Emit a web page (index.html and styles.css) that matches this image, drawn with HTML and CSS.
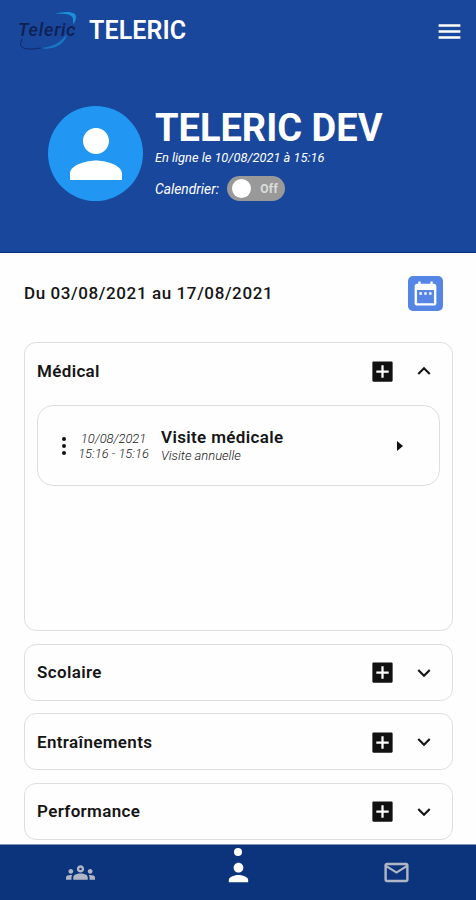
FILE: index.html
```
<!DOCTYPE html>
<html lang="fr">
<head>
  <meta charset="UTF-8">
  <meta name="viewport" content="width=device-width, initial-scale=1.0">
  <title>Teleric</title>
  <link rel="stylesheet" href="styles.css">
</head>
<body>
  <!-- shared icons -->
  <svg class="sprite">
    <symbol id="person" viewBox="0 0 24 24"><path d="M12 12c2.21 0 4-1.79 4-4s-1.79-4-4-4-4 1.79-4 4 1.79 4 4 4zm0 2c-2.67 0-8 1.34-8 4v2h16v-2c0-2.66-5.33-4-8-4z"/></symbol>
    <symbol id="add" viewBox="0 0 24 24"><path d="M20 3H4c-.6 0-1 .4-1 1v16c0 .6.4 1 1 1h16c.6 0 1-.4 1-1V4c0-.6-.4-1-1-1zm-2.500 10h-4.500v4.500h-2v-4.500H6.500v-2h4.500V6.500h2v4.500h4.500v2z"/></symbol>
    <symbol id="down" viewBox="0 0 24 24"><path d="M16.59 8.59L12 13.17 7.41 8.59 6 10l6 6 6-6z"/></symbol>
    <symbol id="up" viewBox="0 0 24 24"><path d="M12 8l-6 6 1.41 1.41L12 10.83l4.59 4.58L18 14z"/></symbol>
  </svg>

  <header class="header">
    <div class="topbar">
      <div class="logo">
        <span class="logo-text">Teleric</span>
        <svg class="logo-swoosh" viewBox="0 0 60 44">
          <path d="M36 3C47 0 58 0 58 6c0 3-1 5-3 7l0-5c0-5-9-6-19-5z" fill="#1b8fd8"/>
          <path d="M23 37c12-1 20-6 26-14-1 9-13 17-26 14z" fill="#1976c6"/>
          <path d="M4 28c-4 8 0 12 19 9" fill="none" stroke="#12286b" stroke-width="1"/>
        </svg>
      </div>
      <span class="brand">TELERIC</span>
      <svg class="menu-icon" viewBox="0 0 24 24"><path d="M3 18h18v-2.1H3V18zm0-5h18v-2H3v2zm0-7v2.1h18V6H3z"/></svg>
    </div>
    <div class="profile">
      <div class="avatar"><svg><use href="#person"/></svg></div>
      <div class="infos">
        <h1 class="name">TELERIC DEV</h1>
        <p class="online">En ligne le 10/08/2021 à 15:16</p>
        <div class="calendar-row">
          <span class="calendar-label">Calendrier:</span>
          <div class="switch"><span class="knob"></span><span class="switch-text">Off</span></div>
        </div>
      </div>
    </div>
  </header>

  <main class="content">
    <div class="period">
      <span class="period-text">Du 03/08/2021 au 17/08/2021</span>
      <button class="date-button">
        <svg viewBox="0 0 24 24"><path d="M9 11H7v2h2v-2zm4 0h-2v2h2v-2zm4 0h-2v2h2v-2zm2-7h-1V2h-2v2H8V2H6v2H5c-1.11 0-1.99.9-1.99 2L3 20c0 1.1.89 2 2 2h14c1.1 0 2-.9 2-2V6c0-1.1-.9-2-2-2zm0 16H5V9h14v11z"/></svg>
      </button>
    </div>

    <section class="card open">
      <div class="card-head">
        <h2 class="card-title">Médical</h2>
        <svg class="add"><use href="#add"/></svg>
        <svg class="chevron"><use href="#up"/></svg>
      </div>
      <div class="event">
        <div class="dots"><i></i><i></i><i></i></div>
        <div class="event-date"><span>10/08/2021</span><span>15:16 - 15:16</span></div>
        <div class="event-text">
          <span class="event-title">Visite médicale</span>
          <span class="event-sub">Visite annuelle</span>
        </div>
        <span class="arrow"></span>
      </div>
    </section>
    <section class="card">
      <div class="card-head">
        <h2 class="card-title">Scolaire</h2>
        <svg class="add"><use href="#add"/></svg>
        <svg class="chevron"><use href="#down"/></svg>
      </div>
    </section>
    <section class="card">
      <div class="card-head">
        <h2 class="card-title">Entraînements</h2>
        <svg class="add"><use href="#add"/></svg>
        <svg class="chevron"><use href="#down"/></svg>
      </div>
    </section>
    <section class="card">
      <div class="card-head">
        <h2 class="card-title">Performance</h2>
        <svg class="add"><use href="#add"/></svg>
        <svg class="chevron"><use href="#down"/></svg>
      </div>
    </section>
  </main>

  <nav class="navbar">
    <a class="tab"><svg viewBox="0 0 24 24"><path fill-rule="evenodd" d="M12 12.75c1.63 0 3.07.39 4.24.9 1.08.48 1.76 1.56 1.76 2.73V18H6v-1.61c0-1.18.68-2.26 1.76-2.73 1.17-.52 2.61-.91 4.24-.91zM4 13c1.1 0 2-.9 2-2s-.9-2-2-2-2 .9-2 2 .9 2 2 2zm1.13 1.1c-.37-.06-.74-.1-1.13-.1-.99 0-1.93.21-2.78.58C.48 14.9 0 15.62 0 16.43V18h4.5v-1.61c0-.83.23-1.61.63-2.29zM20 13c1.1 0 2-.9 2-2s-.9-2-2-2-2 .9-2 2 .9 2 2 2zm4 3.43c0-.81-.48-1.53-1.22-1.85-.85-.37-1.79-.58-2.78-.58-.39 0-.76.04-1.13.1.4.68.63 1.46.63 2.29V18H24v-1.57zM12 6c1.66 0 3 1.34 3 3s-1.34 3-3 3-3-1.34-3-3 1.34-3 3-3zM12 8a1 1 0 1 0 0 2 1 1 0 0 0 0-2z"/></svg></a>
    <a class="tab active"><svg><use href="#person"/></svg></a>
    <a class="tab"><svg viewBox="0 0 24 24"><path d="M22 6c0-1.1-.9-2-2-2H4c-1.1 0-2 .9-2 2v12c0 1.1.9 2 2 2h16c1.1 0 2-.9 2-2V6zm-2 0l-8 5-8-5h16zm0 12H4V8l8 5 8-5v10z"/></svg></a>
  </nav>
</body>
</html>
```
FILE: styles.css
```
* {
  box-sizing: border-box;
}
body {
  margin: 0;
  height: 900px;
  display: flex;
  flex-direction: column;
  overflow: hidden;
  background: #fefefe;
  color: #151515;
  font-family: Roboto, sans-serif;
}
h1, h2, p {
  margin: 0;
}
svg {
  display: block;
  flex: none;
}
.sprite {
  position: absolute;
  width: 0;
  height: 0;
}

/* header */
.header {
  height: 253px;
  flex: none;
  background: #19479b;
  border-bottom: 1px solid #063086;
  color: #fff;
}
.topbar {
  height: 62px;
  display: flex;
  align-items: center;
  padding: 0 12px 0 18px;
}
.logo {
  position: relative;
  width: 60px;
  height: 44px;
  line-height: 42px;
}
.logo-text {
  font-size: 18px;
  font-weight: 500;
  font-style: italic;
  letter-spacing: 0.8px;
  color: #0f2054;
}
.logo-swoosh {
  position: absolute;
  top: 2px;
  left: 0;
  width: 60px;
  height: 44px;
}
.brand {
  flex: 1;
  margin-left: 11px;
  font-size: 25px;
  line-height: 30px;
  font-weight: 600;
  letter-spacing: 0.1px;
}
.menu-icon {
  width: 29px;
  height: 29px;
  fill: #fff;
}
.profile {
  display: flex;
  padding: 44px 48px 0;
}
.avatar {
  width: 95px;
  height: 95px;
  display: flex;
  align-items: center;
  justify-content: center;
  border-radius: 50%;
  background: #2196f3;
}
.avatar svg {
  width: 78px;
  height: 78px;
  fill: #fff;
}
.infos {
  margin-left: 12px;
  white-space: nowrap;
}
.name {
  font-size: 38px;
  line-height: 44px;
  font-weight: 700;
}
.online {
  font-size: 12.8px;
  line-height: 15px;
  font-style: italic;
}
.calendar-row {
  display: flex;
  align-items: center;
  margin-top: 11px;
}
.calendar-label {
  width: 72px;
  font-size: 13.8px;
  font-style: italic;
}
.switch {
  width: 58px;
  height: 25px;
  display: flex;
  align-items: center;
  justify-content: space-between;
  padding: 0 7px 0 5px;
  border-radius: 13px;
  background: #999;
}
.knob {
  width: 19px;
  height: 19px;
  border-radius: 50%;
  background: #fff;
}
.switch-text {
  font-size: 12px;
  font-weight: 700;
  letter-spacing: 0.3px;
  color: #ddd;
}

/* content */
.content {
  flex: 1;
  min-height: 0;
  display: flex;
  flex-direction: column;
  gap: 12.5px;
  padding: 22px 23px 0 24px;
}
.period {
  height: 36px;
  flex: none;
  display: flex;
  align-items: center;
  justify-content: space-between;
  margin-bottom: 18.5px;
  padding-right: 10px;
}
.period-text {
  font-size: 17px;
  font-weight: 500;
  letter-spacing: 0.6px;
}
.date-button {
  width: 35px;
  height: 35px;
  display: flex;
  align-items: center;
  justify-content: center;
  padding: 0;
  border: none;
  border-radius: 5px;
  background: #5585e5;
}
.date-button svg {
  width: 29px;
  height: 29px;
  fill: #fff;
}
.card {
  height: 57px;
  flex: none;
  border: 1px solid #dedede;
  border-radius: 12px;
  padding: 0 12px;
}
.card.open {
  height: 289px;
}
.card-head {
  height: 56px;
  display: flex;
  align-items: center;
  padding-right: 3px;
}
.card-title {
  flex: 1;
  padding-bottom: 1px;
  font-size: 17px;
  font-weight: 600;
  letter-spacing: 0.35px;
}
.add {
  width: 27px;
  height: 27px;
  fill: #111;
}
.chevron {
  width: 26px;
  height: 26px;
  margin-left: 15px;
  fill: #151515;
}
.event {
  height: 81px;
  display: flex;
  align-items: center;
  margin-top: 6px;
  border: 1px solid #dedede;
  border-radius: 16px;
}
.dots {
  width: 4px;
  display: flex;
  flex-direction: column;
  gap: 3px;
  margin-left: 24px;
}
.dots i {
  height: 4px;
  border-radius: 50%;
  background: #111;
}
.event-date {
  width: 71px;
  display: flex;
  flex-direction: column;
  margin-left: 12px;
  font-size: 12.9px;
  line-height: 15px;
  font-style: italic;
  font-weight: 300;
  text-align: center;
  white-space: nowrap;
}
.event-text {
  flex: 1;
  display: flex;
  flex-direction: column;
  margin-left: 12px;
}
.event-title {
  font-size: 17px;
  line-height: 19px;
  font-weight: 600;
  letter-spacing: 0.35px;
}
.event-sub {
  font-size: 13px;
  line-height: 17px;
  font-style: italic;
  font-weight: 300;
}
.arrow {
  margin-right: 36px;
  border-left: 6px solid #111;
  border-top: 5px solid transparent;
  border-bottom: 5px solid transparent;
}

/* bottom navigation */
.navbar {
  height: 56px;
  flex: none;
  display: grid;
  grid-template-columns: 1fr 1fr 1fr;
  padding-left: 1px;
  border-top: 1px solid #8393b5;
  background: #0c347c;
}
.tab {
  position: relative;
  display: flex;
  align-items: center;
  justify-content: center;
}
.tab svg {
  width: 29px;
  height: 29px;
  fill: #b0b6c5;
}
.tab.active svg {
  fill: #fff;
}
.tab.active::before {
  content: "";
  position: absolute;
  top: 3px;
  left: calc(50% - 4px);
  width: 8px;
  height: 8px;
  border-radius: 50%;
  background: #fff;
}
```
